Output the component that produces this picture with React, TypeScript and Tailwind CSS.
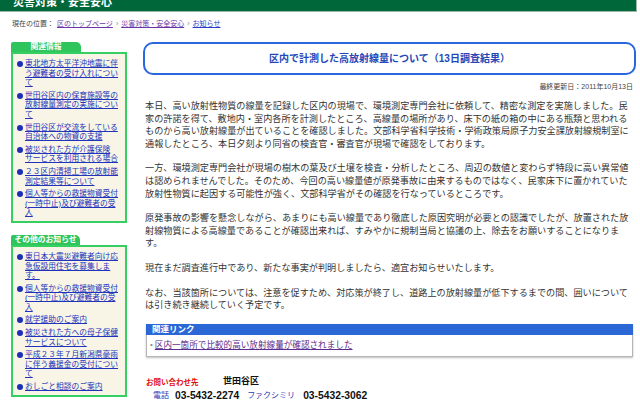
import React from 'react'

const related: string[][] = [
  ['東北地方太平洋沖地震に伴', 'う避難者の受け入れについ', 'て'],
  ['世田谷区内の保育施設等の', '放射線量測定の実施につい', 'て'],
  ['世田谷区が交流をしている', '自治体への物資の支援'],
  ['被災された方が介護保険', 'サービスを利用される場合'],
  ['２３区内清掃工場の放射能', '測定結果等について'],
  ['個人等からの救援物資受付', '(一時中止)及び避難者の受', '入'],
]

const others: string[][] = [
  ['東日本大震災避難者向け応', '急仮設用住宅を募集しま', 'す。'],
  ['個人等からの救援物資受付', '(一時中止)及び避難者の受', '入'],
  ['就学援助のご案内'],
  ['被災された方への母子保健', 'サービスについて'],
  ['平成２３年７月新潟県豪雨', 'に伴う義援金の受付につい', 'て'],
  ['おしごと相談のご案内'],
]

const paragraphs = [
  '本日、高い放射性物質の線量を記録した区内の現場で、環境測定専門会社に依頼して、精密な測定を実施しました。民家の許諾を得て、敷地内・室内各所を計測したところ、高線量の場所があり、床下の紙の箱の中にある瓶類と思われるものから高い放射線量が出ていることを確認しました。文部科学省科学技術・学術政策局原子力安全課放射線規制室に通報したところ、本日夕刻より同省の検査官・審査官が現場で確認をしております。',
  '一方、環境測定専門会社が現場の樹木の葉及び土壌を検査・分析したところ、周辺の数値と変わらず特段に高い異常値は認められませんでした。そのため、今回の高い線量値が原発事故に由来するものではなく、民家床下に置かれていた放射性物質に起因する可能性が強く、文部科学省がその確認を行なっているところです。',
  '原発事故の影響を懸念しながら、あまりにも高い線量であり徹底した原因究明が必要との認識でしたが、放置された放射線物質による高線量であることが確認出来れば、すみやかに規制当局と協議の上、除去をお願いすることになります。',
  '現在まだ調査進行中であり、新たな事実が判明しましたら、適宜お知らせいたします。',
  'なお、当該箇所については、注意を促すため、対応策が終了し、道路上の放射線量が低下するまでの間、囲いについては引き続き継続していく予定です。',
]

function SideBox({ title, items, tabWidth }: { title: string; items: string[][]; tabWidth: string }) {
  return (
    <section>
      <div className={`${tabWidth} h-[10px] bg-[#2fc45c] rounded-tl-[2px] rounded-tr-[5px] flex items-center justify-center`}>
        <span className="text-white font-bold text-[7.8px] leading-[10px] whitespace-nowrap">{title}</span>
      </div>
      <ul className="border-2 border-[#35cf62] bg-[#f8f5e6] pt-[5px] pb-[3px] pl-[4px] flex flex-col gap-[3px]">
        {items.map((lines, i) => (
          <li key={i} className="flex gap-[2px]">
            <span className="w-[6px] h-[6px] rounded-full bg-[#1d2fb5] mt-[2px] shrink-0" />
            <a href="#" className="text-[7.75px] leading-[9.6px] text-[#2233bb] underline">
              {lines.map((l, j) => (
                <span key={j} className="block whitespace-nowrap">{l}</span>
              ))}
            </a>
          </li>
        ))}
      </ul>
    </section>
  )
}

export default function App() {
  return (
    <div className="w-[640px] h-[400px] overflow-hidden bg-white text-[#333] font-['Liberation_Sans','Noto_Sans_CJK_JP',sans-serif]">
      <header className="h-[12px] mr-[3px] bg-[#00673a] border-b border-r border-[#9db8a4] overflow-hidden">
        <h1 className="-mt-[3px] pl-[13px] text-white font-bold text-[11px] leading-[11px]">災害対策・安全安心</h1>
      </header>

      <nav className="mt-[7px] pl-[12px] text-[7px] leading-[10px] flex items-center gap-[3px] text-[#444]">
        <span>現在の位置：</span>
        <a href="#" className="text-[#6a35a8] underline">区のトップページ</a>
        <span className="text-[#888]">›</span>
        <a href="#" className="text-[#6a35a8] underline">災害対策・安全安心</a>
        <span className="text-[#888]">›</span>
        <a href="#" className="text-[#2a3acc] underline">お知らせ</a>
      </nav>

      <div className="flex mt-[13px]">
        <aside className="ml-[11px] w-[116px] shrink-0 flex flex-col gap-[12px]">
          <SideBox title="関連情報" items={related} tabWidth="w-[70px]" />
          <SideBox title="その他のお知らせ" items={others} tabWidth="w-[69px]" />
        </aside>

        <main className="ml-[16px] w-[493px] shrink-0">
          <div className="h-[33px] border-2 border-[#2a66dd] rounded-[10px] flex items-center justify-center">
            <h2 className="text-[10px] font-bold text-[#2548b8]">区内で計測した高放射線量について（13日調査結果）</h2>
          </div>
          <p className="mt-[7px] pr-[3px] text-right text-[7px] leading-[9px] text-[#444]">最終更新日：2011年10月13日</p>

          <div className="mt-[9px] px-[2px] flex flex-col gap-[12px]">
            {paragraphs.map((t, i) => (
              <p key={i} className="text-[9.15px] leading-[12.6px]">{t}</p>
            ))}
          </div>

          <section className="mt-[12px] mx-[3px] shadow-[0_1px_2px_rgba(0,0,0,0.25)]">
            <h3 className="h-[11px] bg-[#2b68d6] text-white font-bold text-[8.5px] leading-[11px] pl-[6px]">関連リンク</h3>
            <div className="h-[22px] border border-t-0 border-[#b5b5b5] flex items-center pl-[3px] gap-[2px]">
              <span className="text-[#888] text-[8px]">•</span>
              <a href="#" className="text-[8.6px] text-[#5b2d8e] underline">区内一箇所で比較的高い放射線量が確認されました</a>
            </div>
          </section>

          <div className="mt-[19px] pl-[3px]">
            <div className="flex items-center h-[13px]">
              <span className="w-[77px] text-[7.5px] font-bold text-[#e01010]">お問い合わせ先</span>
              <span className="text-[9px] font-bold text-[#111]">世田谷区</span>
            </div>
            <div className="flex items-center h-[14px] pl-[7px] gap-[6px]">
              <span className="text-[8px] text-[#2a3ab8]">電話</span>
              <span className="text-[10.3px] font-bold text-[#111]">03-5432-2274</span>
              <span className="text-[8px] text-[#2a3ab8] ml-[2px]">ファクシミリ</span>
              <span className="text-[10.3px] font-bold text-[#111] ml-[2px]">03-5432-3062</span>
            </div>
          </div>
        </main>
      </div>
    </div>
  )
}
